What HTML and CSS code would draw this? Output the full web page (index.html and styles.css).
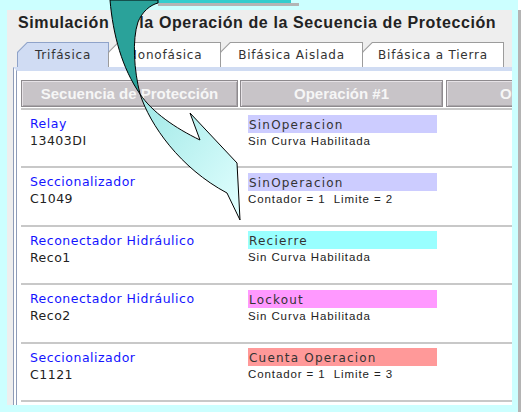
FILE: index.html
```html
<!DOCTYPE html>
<html lang="es">
<head>
    <meta charset="UTF-8">
    <title>Simulación de la Operación de la Secuencia de Protección</title>
    <link rel="stylesheet" href="styles.css">
</head>
<body>
    <div class="slide">
        <div class="panel">
            <div class="title">Simulación de la Operación de la Secuencia de Protección</div>

            <div class="tabs">
                <div class="tab tab-active"><span>Trifásica</span></div>
                <div class="tab tab-2"><span>Monofásica</span></div>
                <div class="tab tab-3"><span>Bifásica Aislada</span></div>
                <div class="tab tab-4"><span>Bifásica a Tierra</span></div>
            </div>

            <div class="tab-body">
                <div class="grid-head">
                    <div class="head-cell col-dev">Secuencia de Protección</div>
                    <div class="head-cell col-op">Operación #1</div>
                    <div class="head-cell col-op2">Operación #2</div>
                </div>

                <div class="rows">
                    <div class="row">
                        <div class="dev">
                            <div class="dev-name">Relay</div>
                            <div class="dev-id">13403DI</div>
                        </div>
                        <div class="op">
                            <div class="op-state st-none">SinOperacion</div>
                            <div class="op-info">Sin Curva Habilitada</div>
                        </div>
                        <div class="op"></div>
                    </div>
                    <div class="row">
                        <div class="dev">
                            <div class="dev-name">Seccionalizador</div>
                            <div class="dev-id">C1049</div>
                        </div>
                        <div class="op">
                            <div class="op-state st-none">SinOperacion</div>
                            <div class="op-info">Contador = 1&nbsp; Limite = 2</div>
                        </div>
                        <div class="op"></div>
                    </div>
                    <div class="row">
                        <div class="dev">
                            <div class="dev-name">Reconectador Hidráulico</div>
                            <div class="dev-id">Reco1</div>
                        </div>
                        <div class="op">
                            <div class="op-state st-reclose">Recierre</div>
                            <div class="op-info">Sin Curva Habilitada</div>
                        </div>
                        <div class="op"></div>
                    </div>
                    <div class="row">
                        <div class="dev">
                            <div class="dev-name">Reconectador Hidráulico</div>
                            <div class="dev-id">Reco2</div>
                        </div>
                        <div class="op">
                            <div class="op-state st-lockout">Lockout</div>
                            <div class="op-info">Sin Curva Habilitada</div>
                        </div>
                        <div class="op"></div>
                    </div>
                    <div class="row">
                        <div class="dev">
                            <div class="dev-name">Seccionalizador</div>
                            <div class="dev-id">C1121</div>
                        </div>
                        <div class="op">
                            <div class="op-state st-count">Cuenta Operacion</div>
                            <div class="op-info">Contador = 1&nbsp; Limite = 3</div>
                        </div>
                        <div class="op"></div>
                    </div>
                    <div class="row"></div>
                </div>
            </div>
        </div>
    </div>

    <!-- callout and arrow drawn over the screenshot -->
    <div class="callout"></div>
    <svg class="arrow" width="521" height="412" viewBox="0 0 521 412">
        <defs>
            <linearGradient id="arrowFill" x1="0" y1="0" x2="1" y2="1">
                <stop offset="0" stop-color="#9fe8e6"/>
                <stop offset="1" stop-color="#e2ffff"/>
            </linearGradient>
        </defs>
        <path d="M110,0 C113,35 122,68 140,94 C134,70 132,40 138,22 C142,12 150,5 158,3 L158,0 Z"
              fill="#2aa29a" stroke="#000" stroke-width="1"/>
        <path d="M140,94 C150,125 180,168 227,193 L240,220 L237,163 L190,113 L200,140 C175,128 152,112 140,94 Z"
              fill="url(#arrowFill)" stroke="#000" stroke-width="1" stroke-linejoin="miter"/>
    </svg>
</body>
</html>
```

FILE: styles.css
```css
html {
    background: #ffffff;
}

body {
    margin: 0;
    width: 521px;
    height: 412px;
    overflow: hidden;
    position: relative;
    background: #ffffff;
    font-family: "DejaVu Sans", sans-serif;
}

.slide {
    width: 518px;
    height: 412px;
    box-sizing: border-box;
    padding: 10px 0 0 7px;
    background: #ccffff;
    box-shadow: 3px 10px 0 #b4b4b4;
}

.panel {
    width: 505px;
    height: 395px;
    overflow: hidden;
    background: #eeeeee;
}

.title {
    padding: 3px 0 0 11px;
    font: bold 16px/20px "Liberation Sans", Arial, sans-serif;
    letter-spacing: 0.6px;
    color: #222222;
    white-space: nowrap;
}

/* tabs */
.tabs {
    display: flex;
    height: 25px;
    margin-top: 9px;
    padding-left: 10px;
}

.tab {
    box-sizing: border-box;
    flex-shrink: 0;
    height: 25px;
    padding: 1px 1px 0 1px;
    margin-left: -1px;
    background: #9c9c9c;
    clip-path: polygon(0 10px, 10px 0, 100% 0, 100% 100%, 0 100%);
}

.tab span {
    display: flex;
    align-items: center;
    justify-content: center;
    height: 100%;
    background: #ffffff;
    clip-path: polygon(0 9.5px, 9.5px 0, 100% 0, 100% 100%, 0 100%);
    font-size: 12px;
    letter-spacing: 0.8px;
    color: #333333;
    white-space: nowrap;
}

.tab-active {
    width: 92px;
    margin-left: 0;
    background: #8fa3c9;
}

.tab-active span {
    background: #d0dcf3;
}

.tab-2 { width: 113px; }
.tab-3 { width: 143px; }
.tab-4 { width: 142px; }

/* tab content */
.tab-body {
    width: 700px;
    height: 340px;
    margin-left: 6px;
    border-top: 4px solid #d0dcf3;
    border-left: 4px double #8e9cb8;
    background: #ffffff;
}

.grid-head {
    display: flex;
    margin: 9px 0 0 4px;
    height: 27px;
}

.head-cell {
    box-sizing: border-box;
    flex-shrink: 0;
    height: 27px;
    display: flex;
    align-items: center;
    justify-content: center;
    background: #c8c4c8;
    border: 1px solid #8e8a8e;
    box-shadow: inset 1px 1px 0 #e6e2e6, inset -1px -1px 0 #aaa6aa;
    font: bold 15px "Liberation Sans", Arial, sans-serif;
    color: #f6f6f6;
    white-space: nowrap;
}

.col-dev { width: 217px; }
.col-op { width: 203px; margin-left: 2px; }
.col-op2 { width: 203px; margin-left: 3px; }

.rows {
    margin: 1px 0 0 4px;
}

.row {
    display: grid;
    grid-template-columns: 219px 205px 1fr;
    height: 56.4px;
    border-top: 2px solid #c8c8c8;
}

.dev {
    padding: 5px 0 0 9px;
    font-size: 12.5px;
    line-height: 17px;
    letter-spacing: 0.5px;
    white-space: nowrap;
}

.dev-name {
    color: #1414ff;
}

.dev-id {
    color: #222222;
}

.op {
    padding: 4.5px 0 0 8px;
}

.op-state {
    width: 188px;
    height: 18px;
    padding-left: 1px;
    font-size: 12px;
    line-height: 21px;
    letter-spacing: 1.2px;
    color: #333333;
    white-space: nowrap;
}

.st-none { background: #ccccff; }
.st-reclose { background: #99ffff; }
.st-lockout { background: #ff99ff; }
.st-count { background: #ff9999; }

.op-info {
    font: 11.5px/17px "Liberation Sans", Arial, sans-serif;
    letter-spacing: 0.9px;
    color: #222222;
    white-space: nowrap;
}

/* slide drawing on top */
.callout {
    position: absolute;
    left: 150px;
    top: 0;
    width: 141px;
    height: 3px;
    background: #33cccc;
    box-shadow: 8px 3px 0 #b4b4b4;
}

.arrow {
    position: absolute;
    left: 0;
    top: 0;
    pointer-events: none;
}
```
